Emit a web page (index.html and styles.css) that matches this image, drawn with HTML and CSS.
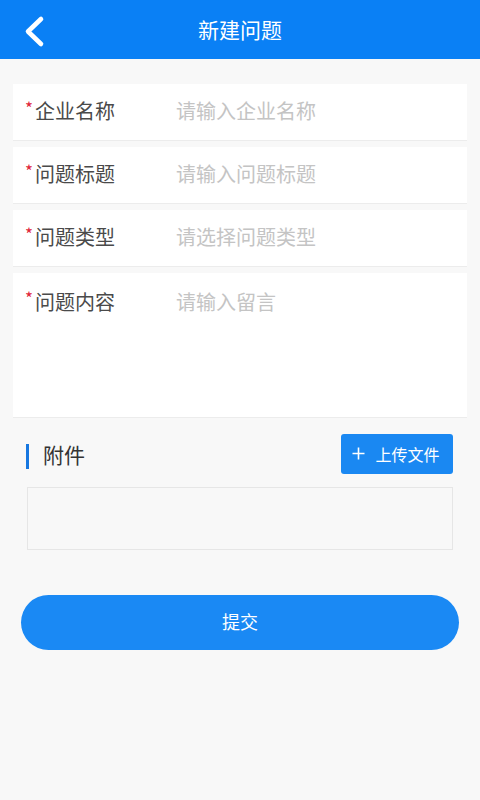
FILE: index.html
```html
<!DOCTYPE html>
<html lang="zh">
<head>
<meta charset="utf-8">
<title>新建问题</title>
<link rel="stylesheet" href="styles.css">
</head>
<body>
<div class="page">
  <header class="topbar">
    <div class="back">
      <svg width="30" height="40" viewBox="0 0 30 40"><polyline points="21,9 8,21.5 21,34" fill="none" stroke="#fff" stroke-width="4.6" stroke-linecap="round" stroke-linejoin="round"/></svg>
    </div>
    <div class="title">新建问题</div>
    <div></div>
  </header>

  <main class="form">
    <div class="card">
      <span class="star">*</span><span class="label">企业名称</span><span class="ph">请输入企业名称</span>
    </div>
    <div class="card">
      <span class="star">*</span><span class="label">问题标题</span><span class="ph">请输入问题标题</span>
    </div>
    <div class="card">
      <span class="star">*</span><span class="label">问题类型</span><span class="ph">请选择问题类型</span>
    </div>
    <div class="card tall">
      <span class="star">*</span><span class="label">问题内容</span><span class="ph">请输入留言</span>
    </div>
  </main>

  <section class="attach">
    <div class="attach-head">
      <div class="attach-title"><span class="bar"></span><span>附件</span></div>
      <div class="upload">
        <svg width="13" height="13" viewBox="0 0 13 13"><path d="M6.5 0.5V12.5M0.5 6.5H12.5" stroke="#fff" stroke-width="1.6"/></svg>
        <span>上传文件</span>
      </div>
    </div>
    <div class="attach-box"></div>
  </section>

  <div class="submit">提交</div>
</div>
</body>
</html>
```

FILE: styles.css
```css
html, body {
  margin: 0;
  padding: 0;
  background: #f8f8f8;
}
body {
  font-family: "Noto Sans CJK SC", "Noto Sans", sans-serif;
  width: 480px;
  height: 800px;
  overflow: hidden;
  line-height: 1;
}
.page {
  display: flex;
  flex-direction: column;
}
.topbar {
  height: 59px;
  background: #0a80f5;
  display: grid;
  grid-template-columns: 70px 1fr 70px;
  align-items: center;
}
.back {
  align-self: start;
  margin-top: 10px;
  margin-left: 20px;
  height: 40px;
}
.back svg { display: block; }
.title {
  text-align: center;
  color: #fff;
  font-size: 21px;
  padding-bottom: 1px;
}
.form {
  padding: 25px 13px 0;
  display: flex;
  flex-direction: column;
  gap: 6px;
}
.card {
  background: #fff;
  height: 53px;
  padding-bottom: 3px;
  border-bottom: 1px solid #ececec;
  display: flex;
  align-items: center;
  padding-left: 12px;
  font-size: 20px;
  box-sizing: content-box;
}
.card.tall {
  height: 125px;
  padding-top: 19px;
  padding-bottom: 0;
  align-items: flex-start;
}
.star {
  width: 10px;
  color: #e0253a;
  font-size: 17px;
  position: relative;
  top: -3px;
}
.label {
  width: 141px;
  color: #4a4a4a;
}
.ph {
  color: #c4c4c4;
}
.attach {
  padding: 16px 27px 0;
}
.attach-head {
  display: flex;
  align-items: center;
  justify-content: space-between;
  height: 40px;
}
.attach-title {
  display: flex;
  align-items: center;
  font-size: 21px;
  color: #333;
}
.bar {
  width: 3px;
  height: 25px;
  background: #1777e0;
  margin-right: 14px;
  margin-left: -1px;
  margin-top: 4px;
}
.upload {
  width: 112px;
  height: 40px;
  background: #1a88f2;
  border-radius: 3px;
  color: #fff;
  font-size: 16px;
  display: flex;
  align-items: center;
  justify-content: center;
  gap: 10px;
  box-sizing: border-box;
  padding-right: 2px;
  padding-bottom: 1px;
}
.upload svg { display: block; }
.attach-box {
  margin-top: 13px;
  height: 61px;
  border: 1px solid #e6e6e6;
  background: #f8f8f8;
}
.submit {
  margin: 45px 21px 0;
  height: 52px;
  padding-bottom: 3px;
  border-radius: 28px;
  background: #1a89f4;
  color: #fff;
  font-size: 18px;
  display: flex;
  align-items: center;
  justify-content: center;
}
```
